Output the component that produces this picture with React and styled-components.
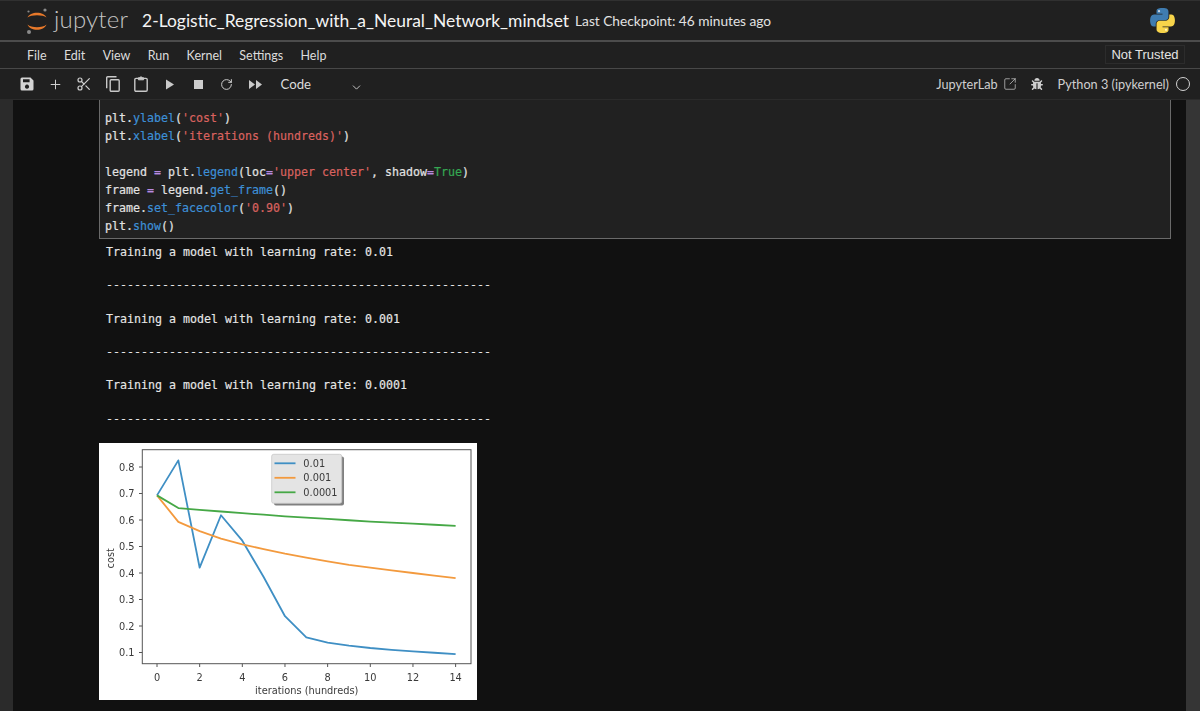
import React from "react";
import styled, { createGlobalStyle } from "styled-components";
import { Plus, Scissors, RotateCw, ChevronDown, SquareArrowOutUpRight } from "lucide-react";
import { FaBug } from "react-icons/fa";

const Global = createGlobalStyle`
  html, body { margin: 0; padding: 0; background: #111; overflow: hidden; }
  * { box-sizing: border-box; }
`;

const Page = styled.div`
  width: 1200px;
  height: 711px;
  display: flex;
  flex-direction: column;
  overflow: hidden;
  background: #202020;
  font-family: "Lato", "Noto Sans", sans-serif;
  color: #d8d8d8;
`;
const Header = styled.header`
  height: 42px;
  flex: none;
  display: flex;
  align-items: center;
  padding: 0 25px;
  border-top: 1px solid #303030;
  border-bottom: 2px solid #4c4c4c;
`;
const Wordmark = styled.span`
  font-family: "Lato", sans-serif;
  font-weight: 300;
  font-size: 24px;
  letter-spacing: 0.2px;
  color: #c4c4c4;
  margin-left: 5px;
  line-height: 30px;
  position: relative;
  top: -2px;
`;
const Title = styled.span`
  font-size: 17.46px;
  color: #f4f4f4;
  margin-left: 14px;
  white-space: nowrap;
`;
const Checkpoint = styled.span`
  font-size: 13.7px;
  color: #e2e2e2;
  margin-left: 6px;
  white-space: nowrap;
`;
const PythonMark = styled.svg`
  margin-left: auto;
  width: 25px;
  height: 25px;
`;
const MenuBar = styled.nav`
  height: 27px;
  flex: none;
  display: flex;
  align-items: center;
  gap: 17.3px;
  padding: 0 15px 0 27px;
  border-bottom: 1px solid #484848;
`;
const MenuItem = styled.span`
  font-size: 12.5px;
  color: #dcdcdc;
`;
const TrustBadge = styled.span`
  margin-left: auto;
  margin-bottom: 2px;
  height: 19px;
  width: 80px;
  display: flex;
  align-items: center;
  justify-content: center;
  font-family: "Liberation Sans", sans-serif;
  font-size: 13px;
  color: #e4e4e4;
  border: 1px solid #2c2c2c;
`;
const Toolbar = styled.div`
  height: 31px;
  flex: none;
  display: flex;
  align-items: center;
  padding: 0 10px 0 13px;
  border-bottom: 1px solid #2b2b2b;
`;
const ToolButton = styled.span`
  width: 28.5px;
  height: 24px;
  flex: none;
  display: flex;
  align-items: center;
  justify-content: center;
  color: #cfcfcf;
`;
const CellType = styled.span`
  font-size: 13.2px;
  color: #dcdcdc;
  margin-left: 11px;
  width: 69px;
`;
const SelectChevron = styled.span`
  display: flex;
  align-items: center;
  color: #c4c4c4;
  position: relative;
  top: 3px;
`;
const KernelArea = styled.div`
  margin-left: auto;
  display: flex;
  align-items: center;
  color: #cfcfcf;
  font-size: 12.7px;
`;
const LabLink = styled.span`
  display: flex;
  align-items: center;
  gap: 5px;
`;
const BugSlot = styled.span`
  display: flex;
  margin: 0 15px 0 14px;
`;
const KernelDot = styled.span`
  width: 14px;
  height: 14px;
  border-radius: 50%;
  border: 1.5px solid #d2d2d2;
  margin-left: 7px;
`;
const Main = styled.main`
  flex: 1;
  min-height: 0;
  display: flex;
`;
const Gutter = styled.div`
  width: 13px;
  flex: none;
  background: #2b2b2b;
`;
const Notebook = styled.div`
  flex: 1;
  min-width: 0;
  background: #111;
  padding: 0 15px 0 86px;
`;
const Scrollbar = styled.div`
  width: 14px;
  flex: none;
  background: #353535;
`;
const CodeCell = styled.pre`
  margin: 0;
  height: 139px;
  padding: 9px 0 0 5px;
  background: #212121;
  border-left: 1px solid #6a6a6a;
  border-right: 1px solid #6a6a6a;
  border-bottom: 1px solid #6a6a6a;
  font-family: "DejaVu Sans Mono", monospace;
  font-size: 11.63px;
  line-height: 18px;
  color: #e2e2e2;
  -webkit-text-stroke: 0.2px;
`;
const Fn = styled.span`color: #3d8fd6;`;
const Str = styled.span`color: #d9625f;`;
const Op = styled.span`color: #b98be0;`;
const Kw = styled.span`color: #35a852;`;
const Output = styled.pre`
  margin: 0;
  padding: 5px 0 0 7px;
  height: 204px;
  font-family: "DejaVu Sans Mono", monospace;
  font-size: 11.63px;
  line-height: 16.67px;
  color: #e6e6e6;
  -webkit-text-stroke: 0.15px;
`;
const Plot = styled.svg`
  display: block;
  width: 378px;
  height: 257px;
  background: #fff;
  filter: blur(0.35px);
`;

const X = (v) => 58 + v * 21.33;
const Y = (v) => 24 + (0.8 - v) * 265;
const series = [
  { label: "0.01", color: "#3f8fc4", data: [0.693, 0.825, 0.42, 0.618, 0.522, 0.385, 0.237, 0.157, 0.137, 0.126, 0.117, 0.11, 0.104, 0.099, 0.094] },
  { label: "0.001", color: "#f39a3e", data: [0.693, 0.593, 0.558, 0.53, 0.508, 0.49, 0.473, 0.458, 0.444, 0.431, 0.42, 0.41, 0.4, 0.39, 0.381] },
  { label: "0.0001", color: "#46a846", data: [0.693, 0.645, 0.638, 0.632, 0.626, 0.62, 0.614, 0.609, 0.604, 0.599, 0.594, 0.59, 0.586, 0.582, 0.578] },
];
const plotFont = { fontFamily: "'DejaVu Sans', sans-serif", fontSize: 9.8, fill: "#3a3a3a" };

function Chart() {
  return (
    <Plot viewBox="0 0 378 257">
      <rect x="43.3" y="6.7" width="328.7" height="214" fill="none" stroke="#555" strokeWidth="1" />
      {series.map((s) => (
        <polyline key={s.label} fill="none" stroke={s.color} strokeWidth="1.8" strokeLinejoin="round"
          points={s.data.map((d, i) => `${X(i)},${Y(d)}`).join(" ")} />
      ))}
      {[0.1, 0.2, 0.3, 0.4, 0.5, 0.6, 0.7, 0.8].map((v) => (
        <g key={v}>
          <line x1="40" x2="43.3" y1={Y(v)} y2={Y(v)} stroke="#555" />
          <text x="35.5" y={Y(v) + 3.5} textAnchor="end" {...plotFont}>{v.toFixed(1)}</text>
        </g>
      ))}
      {[0, 2, 4, 6, 8, 10, 12, 14].map((v) => (
        <g key={v}>
          <line x1={X(v)} x2={X(v)} y1="220.7" y2="224" stroke="#555" />
          <text x={X(v)} y="237.5" textAnchor="middle" {...plotFont}>{v}</text>
        </g>
      ))}
      <text x="207.7" y="250.5" textAnchor="middle" {...plotFont}>iterations (hundreds)</text>
      <text transform="translate(15 115.3) rotate(-90)" textAnchor="middle" {...plotFont}>cost</text>
      <rect x="175" y="13.5" width="70" height="49" rx="2" fill="#808080" />
      <rect x="172.7" y="11.3" width="70" height="49" rx="2" fill="#e4e4e4" stroke="#c8c8c8" strokeWidth="0.8" />
      {series.map((s, i) => (
        <g key={s.label}>
          <line x1="175.5" x2="196.5" y1={20.3 + i * 14.5} y2={20.3 + i * 14.5} stroke={s.color} strokeWidth="1.8" />
          <text x="204.3" y={23.8 + i * 14.5} {...plotFont}>{s.label}</text>
        </g>
      ))}
    </Plot>
  );
}

const JupyterLogo = () => (
  <svg width="24" height="29" viewBox="0 0 24 29">
    <path d="M2.5 11.5 C5 5 19 5 21.5 11.5 C18 8.4 6 8.4 2.5 11.5Z" fill="#e8792a" />
    <path d="M2.5 18.5 C5 25.5 19 25.5 21.5 18.5 C18 22 6 22 2.5 18.5Z" fill="#e8792a" />
    <circle cx="20" cy="4" r="1.6" fill="#8a8a8a" />
    <circle cx="3.5" cy="5.5" r="1.1" fill="#8a8a8a" />
    <circle cx="4" cy="26" r="2" fill="#8a8a8a" />
  </svg>
);

const snakeBody = "M54.9 0C50.3 0 46 .4 42.1 1.1 30.8 3.1 28.8 7.3 28.8 15v10.2h26.6v3.4H18.8c-7.7 0-14.5 4.6-16.6 13.5-2.4 10.1-2.5 16.4 0 27 1.9 7.9 6.4 13.5 14.1 13.5h9.1V70.5c0-8.8 7.6-16.5 16.6-16.5h26.6c7.4 0 13.3-6.1 13.3-13.5V15c0-7.2-6.1-12.6-13.3-13.8C64.9.4 60 0 54.9 0z";

const SaveIcon = () => (
  <svg width="14" height="14" viewBox="0 0 14 14">
    <path fillRule="evenodd" fill="#d4d4d4" d="M1.5 0.5H10.5L13.5 3.5V12a1.5 1.5 0 0 1-1.5 1.5H2A1.5 1.5 0 0 1 .5 12V2A1.5 1.5 0 0 1 2 .5ZM3 2.3V5.3H9.6V2.3ZM7 7.6a2.1 2.1 0 1 0 .01 0Z" />
  </svg>
);
const CopyIcon = () => (
  <svg width="14" height="16" viewBox="0 0 14 16" fill="none" stroke="#c8c8c8" strokeWidth="1.4">
    <rect x="4.2" y="3.7" width="9" height="11.6" rx="1" />
    <path d="M10.5 .8H1.7a1 1 0 0 0-1 1v10.5" />
  </svg>
);
const PasteIcon = () => (
  <svg width="14" height="16" viewBox="0 0 14 16" fill="none" stroke="#c8c8c8" strokeWidth="1.4">
    <rect x=".8" y="2.4" width="12.4" height="12.9" rx="1.2" />
    <path d="M4.4 3.8V1.8h1.6a1 1 0 0 1 2 0h1.6v2Z" fill="#c8c8c8" strokeWidth="1" />
  </svg>
);
const PlayIcon = () => (
  <svg width="10" height="11" viewBox="0 0 10 11"><path d="M1 .5 9 5.5 1 10.5Z" fill="#c9c9c9" /></svg>
);
const StopIcon = () => (
  <svg width="9" height="9" viewBox="0 0 9 9"><rect width="9" height="9" fill="#cdcdcd" /></svg>
);
const FastForwardIcon = () => (
  <svg width="13" height="9" viewBox="0 0 13 9"><path d="M0 0 6 4.5 0 9ZM7 0 13 4.5 7 9Z" fill="#c9c9c9" /></svg>
);

const Line = ({ children }) => <>{children}{"\n"}</>;

export default function App() {
  const rule = "-".repeat(55);
  return (
    <Page>
      <Global />
      <Header>
        <JupyterLogo />
        <Wordmark>jupyter</Wordmark>
        <Title>2-Logistic_Regression_with_a_Neural_Network_mindset</Title>
        <Checkpoint>Last Checkpoint: 46 minutes ago</Checkpoint>
        <PythonMark viewBox="0 0 111 111">
          <path d={snakeBody} fill="#3f7cb0" />
          <circle cx="40" cy="14" r="5" fill="#c9d6e2" />
          <g transform="rotate(180 55.5 55.5)">
            <path d={snakeBody} fill="#f7d44a" />
            <circle cx="40" cy="14" r="5" fill="#fdf3c4" />
          </g>
        </PythonMark>
      </Header>
      <MenuBar>
        {["File", "Edit", "View", "Run", "Kernel", "Settings", "Help"].map((m) => (
          <MenuItem key={m}>{m}</MenuItem>
        ))}
        <TrustBadge>Not Trusted</TrustBadge>
      </MenuBar>
      <Toolbar>
        <ToolButton><SaveIcon /></ToolButton>
        <ToolButton><Plus size={15} strokeWidth={1.6} /></ToolButton>
        <ToolButton><Scissors size={16} strokeWidth={1.8} /></ToolButton>
        <ToolButton><CopyIcon /></ToolButton>
        <ToolButton><PasteIcon /></ToolButton>
        <ToolButton><PlayIcon /></ToolButton>
        <ToolButton><StopIcon /></ToolButton>
        <ToolButton><RotateCw size={13} strokeWidth={1.8} /></ToolButton>
        <ToolButton><FastForwardIcon /></ToolButton>
        <CellType>Code</CellType>
        <SelectChevron><ChevronDown size={13} strokeWidth={1.8} /></SelectChevron>
        <KernelArea>
          <LabLink>JupyterLab <SquareArrowOutUpRight size={14} strokeWidth={1.2} /></LabLink>
          <BugSlot><FaBug size={12} /></BugSlot>
          <span>Python 3 (ipykernel)</span>
          <KernelDot />
        </KernelArea>
      </Toolbar>
      <Main>
        <Gutter />
        <Notebook>
          <CodeCell>
            <Line>plt.<Fn>ylabel</Fn>(<Str>'cost'</Str>)</Line>
            <Line>plt.<Fn>xlabel</Fn>(<Str>'iterations (hundreds)'</Str>)</Line>
            <Line> </Line>
            <Line>legend <Op>=</Op> plt.<Fn>legend</Fn>(loc<Op>=</Op><Str>'upper center'</Str>, shadow<Op>=</Op><Kw>True</Kw>)</Line>
            <Line>frame <Op>=</Op> legend.<Fn>get_frame</Fn>()</Line>
            <Line>frame.<Fn>set_facecolor</Fn>(<Str>'0.90'</Str>)</Line>
            <Line>plt.<Fn>show</Fn>()</Line>
          </CodeCell>
          <Output>{`Training a model with learning rate: 0.01

${rule}

Training a model with learning rate: 0.001

${rule}

Training a model with learning rate: 0.0001

${rule}`}</Output>
          <Chart />
        </Notebook>
        <Scrollbar />
      </Main>
    </Page>
  );
}
